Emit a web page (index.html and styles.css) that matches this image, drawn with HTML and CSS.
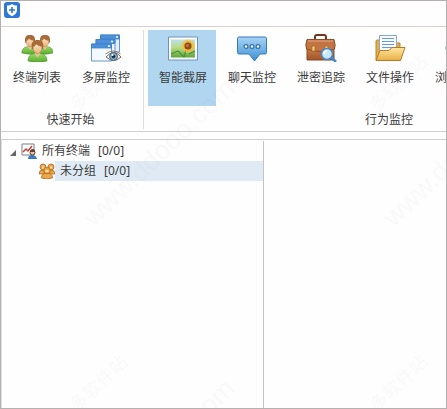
FILE: index.html
```html
<!DOCTYPE html>
<html lang="zh-CN">
<head>
    <meta charset="UTF-8">
    <meta name="viewport" content="width=device-width, initial-scale=1.0">
    <title>终端监控</title>
    <link rel="stylesheet" href="styles.css">
</head>
<body>
<div class="window">
    <header class="title-bar">
        <svg class="app-logo" viewBox="0 0 16 16">
            <rect width="16" height="16" rx="3" fill="#2f78d6"/>
            <path d="M8 2 10 3.3 13 3.6V8c0 3-2 4.8-5 6.2C5 12.800 3 11 3 8V3.600L6 3.300Z" fill="#fff"/>
            <path d="M8 5v6M5 8h6" stroke="#2f78d6" stroke-width="1.700"/>
        </svg>
    </header>

    <nav class="ribbon">
        <section class="ribbon-group">
            <div class="ribbon-buttons">
                <button class="ribbon-button">
                    <svg class="ribbon-icon" viewBox="0 0 32 28">
                        <defs>
                            <linearGradient id="shirt" x2="0" y2="1"><stop stop-color="#9ed968"/><stop offset="1" stop-color="#55a92f"/></linearGradient>
                            <linearGradient id="face" x2="0" y2="1"><stop stop-color="#ffe4c0"/><stop offset="1" stop-color="#e5ad79"/></linearGradient>
                            <g id="person">
                                <path d="M-9.500 21c0-5 3-7 6.500-7.500h6c3.500.5 6.500 2.500 6.500 7.500q-9.500 3-19 0Z" fill="url(#shirt)" stroke="#4d9428" stroke-width=".6"/>
                                <path d="M-3 13 0 17.500 3 13Z" fill="#f0c49a"/>
                                <path d="M-5.500 9C-7 2-4 0 0 0s7 2 5.500 9Z" fill="#a86b38"/>
                                <path d="M-4.300 7q2-1 3-3 2 2 5.600 2.500Q5 12 0 14q-5-2-4.300-7Z" fill="url(#face)" stroke="#b07845" stroke-width=".5"/>
                            </g>
                        </defs>
                        <use href="#person" transform="translate(9 1) scale(.86)"/>
                        <use href="#person" transform="translate(24 1) scale(.86)"/>
                        <use href="#person" transform="translate(16.500 6)"/>
                    </svg>
                    终端列表
                </button>
                <button class="ribbon-button">
                    <svg class="ribbon-icon" viewBox="0 0 32 28">
                        <g stroke="#3f7fc8" stroke-width=".8">
                            <path d="M10.500 1h19v17h-19z" fill="#e3f0fc"/>
                            <path d="M10.500 1h19v4h-19z" fill="#4d91db"/>
                            <path d="M6 5.500h19v17H6z" fill="#e9f4fe"/>
                            <path d="M6 5.500h19v4H6z" fill="#4d91db"/>
                            <path d="M1.500 10h20v17h-20z" fill="#f3f9ff"/>
                            <path d="M1.500 10h20v4h-20z" fill="#4d91db"/>
                        </g>
                        <path d="M26 3h2M21 7.500h2M18 12h2" stroke="#fff" stroke-width="1.300"/>
                        <path d="M16 23q8-9 15 0-7 7-15 0Z" fill="#fff" stroke="#85654e"/>
                        <path d="M15.500 20q8-6 15 0" fill="none" stroke="#a17b60"/>
                        <circle cx="23.500" cy="22.500" r="4" fill="#7aa6c6" stroke="#4a6780"/>
                        <circle cx="23.500" cy="22.500" r="1.800" fill="#1c2b3c"/>
                        <circle cx="22.500" cy="21" r="1" fill="#fff"/>
                    </svg>
                    多屏监控
                </button>
            </div>
            <h2 class="group-title">快速开始</h2>
        </section>

        <section class="ribbon-group ribbon-group-monitor">
            <div class="ribbon-buttons">
                <button class="ribbon-button active">
                    <svg class="ribbon-icon" viewBox="0 0 32 28">
                        <defs>
                            <linearGradient id="meadow" x2="0" y2="1"><stop stop-color="#bddff0"/><stop offset=".45" stop-color="#b9dc82"/><stop offset="1" stop-color="#5aa53c"/></linearGradient>
                        </defs>
                        <path d="M1.500 3h29v23h-29z" fill="#fff" stroke="#6f94b7"/>
                        <path d="M4 5.500h24v18H4z" fill="url(#meadow)"/>
                        <path d="M20 13 17 23M4 20l7-3 6 6M22 20l6-3" stroke="#4a9434" stroke-width="1.300" fill="none"/>
                        <circle cx="21" cy="12" r="5" fill="#e0a02b" stroke="#f3c247" stroke-width="3" stroke-dasharray="2 .6"/>
                        <circle cx="21" cy="12" r="3.500" fill="#8e4c1d"/>
                        <circle cx="20.500" cy="11.500" r="1.500" fill="#bd7936"/>
                    </svg>
                    智能截屏
                </button>
                <button class="ribbon-button">
                    <svg class="ribbon-icon" viewBox="0 0 32 28">
                        <defs>
                            <linearGradient id="bubble" x2="0" y2="1"><stop stop-color="#a8d5f7"/><stop offset="1" stop-color="#3f8fd2"/></linearGradient>
                        </defs>
                        <path d="M3 3h26q1.500 0 1.500 1.500v14q0 1.500-1.500 1.500h-5l-5.500 7-5.500-7H3q-1.500 0-1.500-1.500v-14Q1.500 3 3 3Z" fill="url(#bubble)" stroke="#347bb8"/>
                        <g fill="#fff" stroke="#2b6ead" stroke-width="1.200">
                            <circle cx="10" cy="12.500" r="1.900"/><circle cx="16" cy="12.500" r="1.900"/><circle cx="22" cy="12.500" r="1.900"/>
                        </g>
                    </svg>
                    聊天监控
                </button>
                <button class="ribbon-button">
                    <svg class="ribbon-icon" viewBox="0 0 32 28">
                        <defs>
                            <linearGradient id="leather" x2="0" y2="1"><stop stop-color="#cf8048"/><stop offset="1" stop-color="#a3542a"/></linearGradient>
                        </defs>
                        <path d="M10 6V3q0-2 2-2h7q2 0 2 2v3" fill="none" stroke="#71371c" stroke-width="2"/>
                        <path d="M2 13h27v13H2z" fill="url(#leather)" stroke="#8a4722"/>
                        <path d="M2 5.500h27q2 6 .5 9.500-14 5-28 0Q0 11 2 5.500Z" fill="#c27444" stroke="#8f4d28"/>
                        <path d="M3 7h25" stroke="#e6a778"/>
                        <path d="M7 12h3v5H7zM20 12h3v5h-3z" fill="#f3d26c" stroke="#9d6522" stroke-width=".7"/>
                        <path d="m26 23 5 5" stroke="#4287c8" stroke-width="2.500"/>
                        <circle cx="22" cy="20" r="5.500" fill="#c6e9ff" stroke="#4789c6" stroke-width="1.500"/>
                        <path d="M19 20q0-3 3-3" stroke="#fff" stroke-width="1.500" fill="none"/>
                    </svg>
                    泄密追踪
                </button>
                <button class="ribbon-button">
                    <svg class="ribbon-icon" viewBox="0 0 32 28">
                        <defs>
                            <linearGradient id="folder" x2="0" y2="1"><stop stop-color="#ffe7a1"/><stop offset="1" stop-color="#e9af45"/></linearGradient>
                        </defs>
                        <path d="M2 26V7q0-1 1-1h5l2 3h16v17Z" fill="#e7ad45" stroke="#b98630"/>
                        <path d="M5.500 1.500h17v20h-17z" fill="#f7fbff" stroke="#8aa9cb"/>
                        <path d="M8 4.500h12M8 7.500h12M8 10.500h12M8 13.500h12" stroke="#699bd0"/>
                        <path d="m2 26.500 4-10h9l3-3h13l-4.500 13Z" fill="url(#folder)" stroke="#b67b25"/>
                    </svg>
                    文件操作
                </button>
                <button class="ribbon-button">
                    <svg class="ribbon-icon" viewBox="0 0 32 28">
                        <circle cx="16" cy="14" r="13" fill="#75b3ea" stroke="#3c7fc3"/>
                        <path d="M6 14h20M16 3q-10 11 0 22 10-11 0-22" fill="none" stroke="#d4eafa"/>
                    </svg>
                    浏览监控
                </button>
            </div>
            <h2 class="group-title">行为监控</h2>
        </section>
    </nav>

    <main class="workspace">
        <aside class="tree-pane">
            <ul class="tree">
                <li>
                    <div class="tree-row">
                        <svg class="tree-arrow" viewBox="0 0 6 6"><path d="M6 0v6H0Z" fill="#666"/></svg>
                        <svg class="tree-icon" viewBox="0 0 16 16">
                            <path d="M1 1h12v11H1z" fill="#fff" stroke="#777e88"/>
                            <path d="m2 9 3-3 2 2 4-5" fill="none" stroke="#cf382e" stroke-width="1.400"/>
                            <path d="M7 16q0-4 4-4 4 0 5 4Z" fill="#397bc0"/>
                            <circle cx="11.500" cy="9.500" r="2.500" fill="#edc398" stroke="#5e4133"/>
                            <path d="M9 9q0-3 3-3 2 0 2 3Z" fill="#5e4133"/>
                        </svg>
                        <span class="tree-label">所有终端<span class="count">[0/0]</span></span>
                    </div>
                    <ul class="tree-children">
                        <li class="tree-row">
                            <svg class="tree-icon" viewBox="0 0 16 16">
                                <g fill="#eba648" stroke="#a9601e" stroke-width=".7">
                                    <path d="M0 11q0-4 4-4t4 4ZM8 11q0-4 4-4t4 4Z"/>
                                    <circle cx="4" cy="4" r="3"/><circle cx="12" cy="4" r="3"/>
                                    <path d="M2.500 15q0-5 5.500-5t5.500 5q-5.500 2-11 0Z"/>
                                    <circle cx="8" cy="7.500" r="3.300"/>
                                </g>
                                <path d="M3 4.500h2M11 4.500h2M6.500 8h3" stroke="#ffe0a1" stroke-width="2"/>
                            </svg>
                            <span class="tree-label selected">未分组<span class="count">[0/0]</span></span>
                        </li>
                    </ul>
                </li>
            </ul>
        </aside>
        <div class="content-pane"></div>
    </main>

    <svg class="watermark" aria-hidden="true">
        <defs>
            <pattern id="mark" width="300" height="300" patternUnits="userSpaceOnUse">
                <text class="mark-url" transform="translate(93 227) rotate(-44)">www.ddooo.com</text>
                <text class="mark-name" transform="translate(76 112) rotate(-44)">多软件站</text>
            </pattern>
        </defs>
        <rect width="100%" height="100%" fill="url(#mark)"/>
    </svg>
</div>
</body>
</html>
```
FILE: styles.css
```css
:root {
    --frame-color: #b5b1b1;
    --line-color: #cfcfcf;
    --active-color: #b1d6f0;
    --selected-color: #dfeaf4;
    --text-color: #3c3c3c;
}

* {
    box-sizing: border-box;
}

body {
    margin: 0;
    font-family: "Noto Sans", "Noto Sans CJK SC", sans-serif;
    font-size: 12px;
    color: var(--text-color);
}

.window {
    position: relative;
    display: flex;
    flex-direction: column;
    min-height: 100vh;
    overflow: hidden;
    border: 1px solid var(--frame-color);
    background-color: #fefefe;
}

.title-bar {
    height: 26px;
    padding: 1px 3px;
    border-bottom: 1px solid #d9cfcd;
}

.app-logo {
    display: block;
    width: 16px;
    height: 16px;
}

/* Ribbon */

.ribbon {
    display: flex;
    overflow: hidden;
    padding: 3px 0 2px 1px;
    border-bottom: 1px solid var(--line-color);
}

.ribbon-group {
    flex: none;
}

.ribbon-group + .ribbon-group {
    margin-left: 4px;
    padding-left: 4px;
    border-left: 1px solid #dedede;
}

.ribbon-group-monitor {
    min-width: 487px;
}

.ribbon-buttons {
    display: flex;
    gap: 1px;
}

.ribbon-button {
    display: flex;
    flex: none;
    flex-direction: column;
    align-items: center;
    gap: 7px;
    width: 68px;
    height: 76px;
    padding: 4px 0 0 2px;
    border: none;
    background: none;
    color: inherit;
    font: inherit;
    line-height: 18px;
}

.ribbon-button:hover,
.ribbon-button.active {
    background-color: var(--active-color);
}

.ribbon-icon {
    width: 32px;
    height: 28px;
}

.group-title {
    margin: 5px 0 0;
    font-size: 12px;
    font-weight: normal;
    line-height: 18px;
    text-align: center;
}

/* Workspace */

.workspace {
    display: flex;
    flex: 1;
    margin-top: 7px;
    border-top: 1px solid var(--line-color);
    border-left: 1px solid #e2e2e2;
}

.tree-pane {
    flex: none;
    width: 262px;
    margin-top: 1px;
    border-right: 1px solid #c4c4c4;
}

.content-pane {
    flex: 1;
}

.tree,
.tree-children {
    margin: 0;
    padding: 0;
    list-style: none;
}

.tree-row {
    display: flex;
    align-items: center;
    height: 20px;
    padding-left: 8px;
}

.tree-children .tree-row {
    padding-left: 37px;
}

.tree-arrow {
    width: 6px;
    height: 6px;
    margin: 4px 5px 0 0;
}

.tree-icon {
    width: 16px;
    height: 16px;
}

.tree-label {
    flex: 1;
    padding-left: 5px;
    line-height: 20px;
}

.tree-label.selected {
    background-color: var(--selected-color);
}

.count {
    margin-left: 8px;
}

.watermark {
    position: absolute;
    top: 0;
    left: 0;
    width: 100%;
    height: 100%;
    pointer-events: none;
}

.mark-url,
.mark-name {
    fill: #5a5a8c;
    fill-opacity: 0.03;
}

.mark-url {
    font-family: "Liberation Sans", sans-serif;
    font-size: 27px;
}

.mark-name {
    font-size: 18px;
}
```
